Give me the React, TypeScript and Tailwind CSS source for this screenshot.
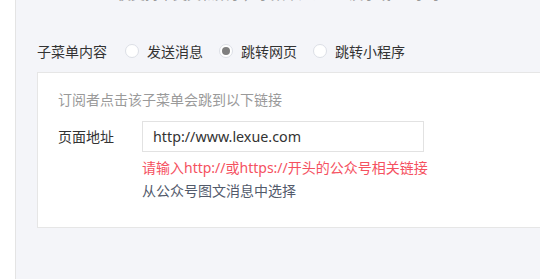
const font = { fontFamily: '"Noto Sans", "Noto Sans CJK SC", sans-serif' };

function Radio({ checked, label }: { checked?: boolean; label: string }) {
  return (
    <label className="flex items-center gap-[8px]">
      <span className="w-[14px] h-[14px] rounded-full border border-[#dcdfe6] bg-white flex items-center justify-center">
        {checked && <span className="w-[8px] h-[8px] rounded-full bg-[#7f7f7f]" />}
      </span>
      <span className="text-[14px] text-[#333]">{label}</span>
    </label>
  );
}

export default function App() {
  return (
    <div className="flex w-[540px] h-[279px] overflow-hidden bg-white" style={font}>
      <div className="w-[16px] bg-white border-r border-[#e4e4e4]" />
      <div className="flex-1 bg-[#f4f5f9] overflow-hidden">
        <p className="mt-[-16px] ml-[101px] text-[14px] leading-[20px] text-[#999] whitespace-nowrap">
          仅支持中英文和数字，字数不超过4个汉字或8个字母
        </p>
        <div className="flex items-center mt-[37px] ml-[21px] h-[20px] gap-[16px]">
          <span className="text-[14px] text-[#333] mr-[2px]">子菜单内容</span>
          <Radio label="发送消息" />
          <Radio checked label="跳转网页" />
          <Radio label="跳转小程序" />
        </div>
        <div className="mt-[11px] ml-[21px] w-[560px] h-[156px] bg-white border border-[#e6e6e6] pl-[20px] pt-[17px]">
          <p className="text-[14px] leading-[20px] text-[#9a9a9a]">订阅者点击该子菜单会跳到以下链接</p>
          <div className="flex mt-[11px]">
            <span className="w-[84px] text-[14px] text-[#333] leading-[31px]">页面地址</span>
            <div className="flex flex-col">
              <div className="w-[282px] h-[31px] border border-[#e2e2e2] flex items-center px-[10px] text-[14.3px] text-[#333]">
                http://www.lexue.com
              </div>
              <p className="mt-[6px] text-[14px] leading-[20px] text-[#f5515f]">请输入http://或https://开头的公众号相关链接</p>
              <p className="mt-[3px] text-[14px] leading-[20px] text-[#525a6b]">从公众号图文消息中选择</p>
            </div>
          </div>
        </div>
      </div>
    </div>
  );
}
